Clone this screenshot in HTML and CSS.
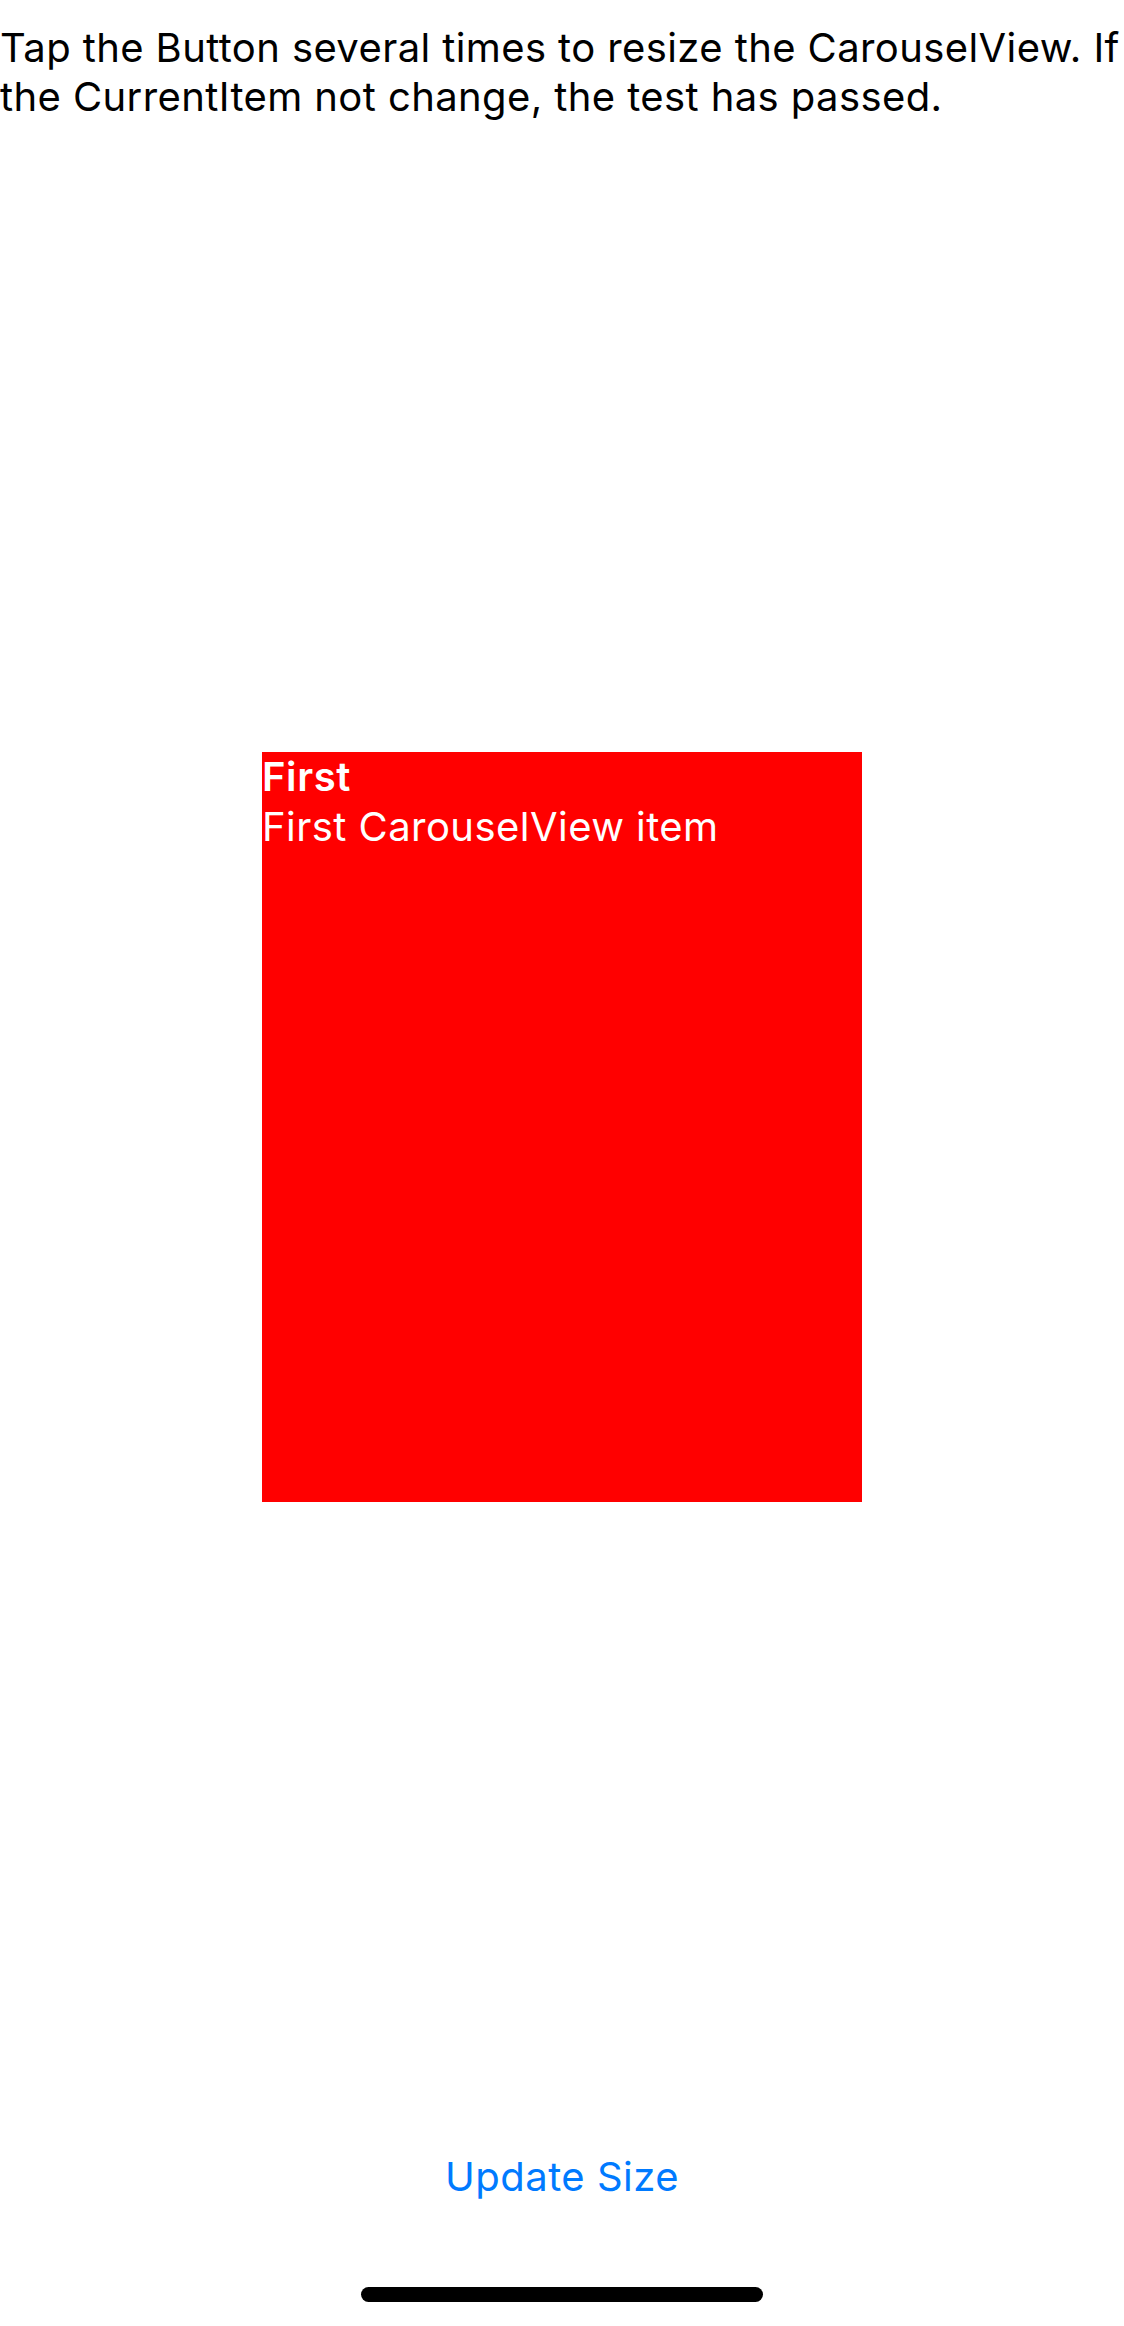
FILE: index.html
```html
<!DOCTYPE html>
<html>
<head>
<meta charset="utf-8">
<link rel="stylesheet" href="styles.css">
</head>
<body>
<div class="screen">
  <p class="instructions">Tap the Button several times to resize the CarouselView. If the CurrentItem not change, the test has passed.</p>
  <div class="carousel">
    <div class="item">
      <div class="item-title">First</div>
      <div class="item-desc">First CarouselView item</div>
    </div>
  </div>
  <div class="button-row">
    <span class="update-button">Update Size</span>
  </div>
  <div class="home-indicator"></div>
</div>
</body>
</html>
```
FILE: styles.css
```css
html, body {
  margin: 0;
  padding: 0;
  background: #ffffff;
}
.screen {
  width: 1124px;
  height: 2326px;
  display: flex;
  flex-direction: column;
  align-items: stretch;
  font-family: Inter, "Noto Sans", sans-serif;
  overflow: hidden;
}
.instructions {
  margin: 0;
  padding-top: 23px;
  font-size: 40px;
  line-height: 49px;
  letter-spacing: 0.4px;
  color: #000;
}
.carousel {
  margin-top: 631px;
  display: flex;
  justify-content: center;
}
.item {
  width: 600px;
  height: 750px;
  background: #ff0000;
  color: #ffffff;
}
.item-title {
  font-weight: 600;
  font-size: 40px;
  line-height: 50px;
  letter-spacing: 0.6px;
}
.item-desc {
  font-size: 40px;
  line-height: 50px;
  letter-spacing: 0.45px;
}
.button-row {
  margin-top: 651px;
  display: flex;
  justify-content: center;
}
.update-button {
  color: #007aff;
  font-size: 40px;
  line-height: 48px;
  letter-spacing: 0.5px;
}
.home-indicator {
  margin: 86px auto 0;
  width: 402px;
  height: 15px;
  border-radius: 8px;
  background: #000;
}
```
